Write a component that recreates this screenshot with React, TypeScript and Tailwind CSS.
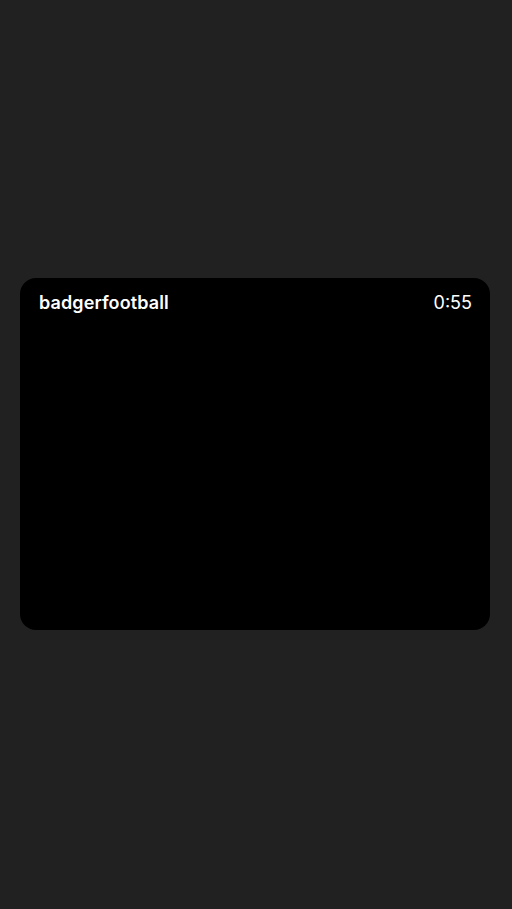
export default function App() {
  return (
    <div className="min-h-[909px] w-full bg-[#212121] flex justify-center pt-[278px]" style={{ fontFamily: 'Inter, "Noto Sans", sans-serif' }}>
      <div className="w-[470px] h-[352px] -translate-x-px rounded-[16px] bg-black flex items-start justify-between pl-[19px] pr-[18px] pt-[13px]">
        <span className="text-[18px] leading-6 font-semibold text-white tracking-[0.1px]">badgerfootball</span>
        <span className="text-[18px] leading-6 font-normal text-white">0:55</span>
      </div>
    </div>
  );
}
